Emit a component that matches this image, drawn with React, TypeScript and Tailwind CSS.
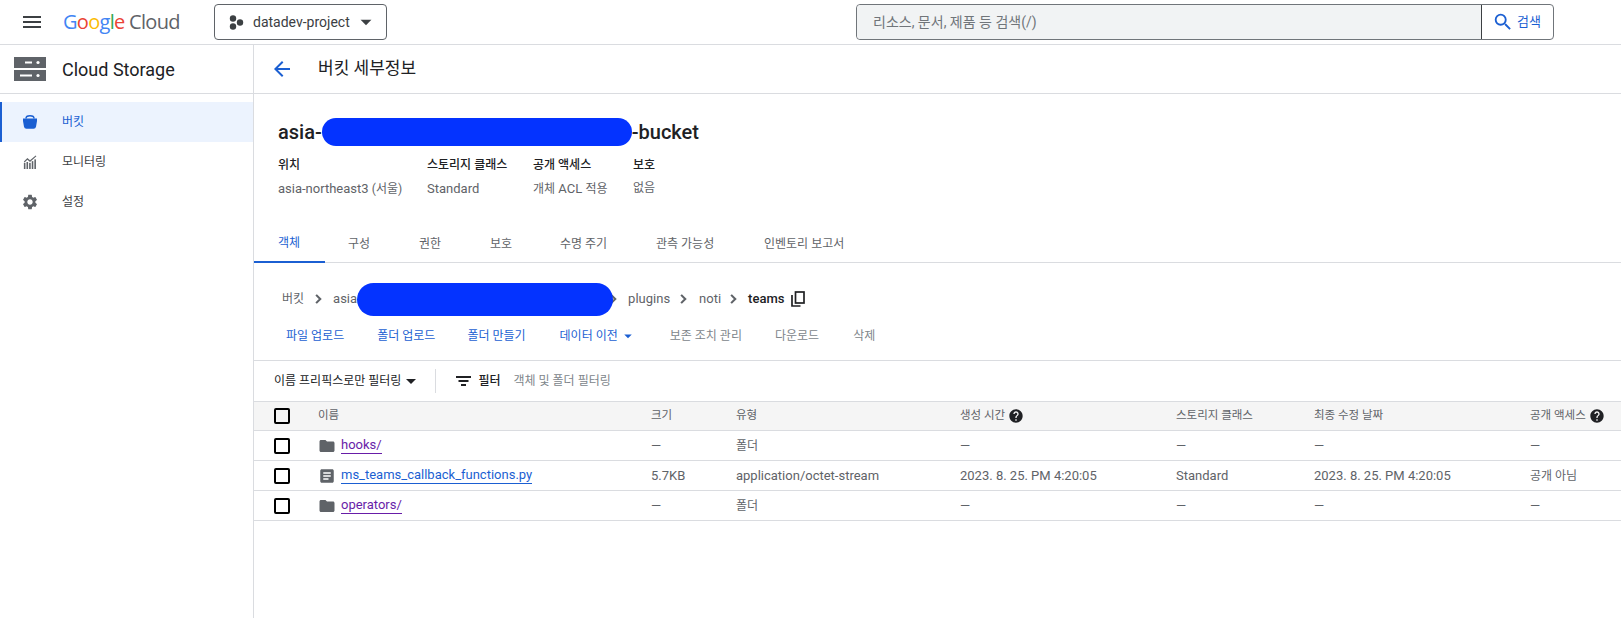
import React from 'react';
import {
  MdArrowBack,
  MdArrowDropDown,
  MdArticle,
  MdFolder,
  MdHelp,
  MdMenu,
  MdSearch,
  MdSettings,
} from 'react-icons/md';

const BucketIcon = () => (
  <svg width="14" height="14" viewBox="0 0 14 14" className="text-[#1b5fd2]">
    <path fill="none" stroke="currentColor" strokeWidth="1.500" d="M3 3.500C3 1.800 4.500 .8 7 .8s4 1 4 2.700" />
    <path fill="currentColor" d="M0 3.500h14v2.500l-1 5.800a2.500 2.500 0 0 1-2.500 2h-7a2.500 2.500 0 0 1-2.500-2L0 6z" />
  </svg>
);

const MonitorIcon = () => (
  <svg width="14" height="14" viewBox="0 0 16 16" fill="#5f6368">
    <rect x="1" y="9" width="1.800" height="7" />
    <rect x="4" y="8" width="1.800" height="8" />
    <rect x="7" y="9" width="1.800" height="7" />
    <rect x="10" y="7" width="1.800" height="9" />
    <rect x="13" y="5" width="1.800" height="11" />
    <path d="M1 7.500 5 3.500l3 2.500L14.500 .5l.8.9L8 8 5 5.500 1.800 8.500z" />
  </svg>
);

const StorageLogo = () => (
  <svg width="32" height="24" viewBox="0 0 32 24">
    <rect x="0" y="0" width="32" height="11" fill="#5f6368" />
    <rect x="0" y="13" width="32" height="11" fill="#5f6368" />
    <rect x="11" y="4.500" width="7" height="2" fill="#fff" />
    <circle cx="24" cy="5.500" r="1.600" fill="#fff" />
    <rect x="6" y="17.500" width="12" height="2" fill="#fff" />
    <circle cx="24" cy="18.500" r="1.600" fill="#fff" />
  </svg>
);

const ProjectDots = () => (
  <svg width="15" height="15" viewBox="0 0 15 15" fill="#3c4043">
    <circle cx="4" cy="3.500" r="3.200" />
    <circle cx="4" cy="11.500" r="3.200" />
    <circle cx="11" cy="7.500" r="3.200" />
  </svg>
);

const CopyIcon = () => (
  <svg width="14" height="16" viewBox="0 0 14 16" fill="none" stroke="#202124" strokeWidth="1.700" className="ml-[7px]">
    <rect x="4.500" y="1" width="8.500" height="11" />
    <path d="M1 4v11h8.500" />
  </svg>
);

const FilterIcon = () => (
  <svg width="15" height="10" viewBox="0 0 15 10" fill="#202124" className="ml-[20px]">
    <rect x="0" y="0" width="15" height="2" />
    <rect x="2.500" y="4" width="10" height="2" />
    <rect x="5" y="8" width="5" height="2" />
  </svg>
);

const Blob = ({ className }: { className: string }) => (
  <span className={`relative z-10 inline-block bg-[#0433ff] ${className}`}></span>
);

const Chev = ({ className }: { className: string }) => (
  <svg width="18" height="18" viewBox="0 0 24 24" fill="none" stroke="#5f6368" strokeWidth="2.800" className={className}>
    <path d="M9.500 6.500 15 12l-5.500 5.500" />
  </svg>
);

const Check = () => <span className="ml-[20px] block w-4 h-4 rounded-[2px] border-2 border-black"></span>;

const Dash = () => <span className="text-[13px]">—</span>;

const COLS = 'grid grid-cols-[64px_333px_85px_224px_216px_138px_216px_1fr] items-center';

const rows = [
  { name: 'hooks/', folder: true, size: '', type: '폴더', created: '', cls: '', modified: '', access: '' },
  {
    name: 'ms_teams_callback_functions.py',
    folder: false,
    size: '5.7KB',
    type: 'application/octet-stream',
    created: '2023. 8. 25. PM 4:20:05',
    cls: 'Standard',
    modified: '2023. 8. 25. PM 4:20:05',
    access: '공개 아님',
  },
  { name: 'operators/', folder: true, size: '', type: '폴더', created: '', cls: '', modified: '', access: '' },
];

export default function App() {
  return (
    <div className="h-[618px] w-full overflow-hidden bg-white text-[13px] text-[#5f6368] font-['Roboto','Noto_Sans_CJK_KR',sans-serif] flex flex-col">
      {/* Top bar */}
      <header className="h-[45px] shrink-0 border-b border-[#dadce0] flex items-center">
        <MdMenu size={24} className="ml-[20px] text-[#3c4043]" />
        <div className="ml-[19px] w-[127px] text-[20px] tracking-[-0.7px] font-['Open_Sans',sans-serif] whitespace-nowrap">
          <span className="text-[#4285f4]">G</span>
          <span className="text-[#ea4335]">o</span>
          <span className="text-[#fbbc04]">o</span>
          <span className="text-[#4285f4]">g</span>
          <span className="text-[#34a853]">l</span>
          <span className="text-[#ea4335]">e</span>
          <span className="text-[#5f6368]"> Cloud</span>
        </div>
        <button className="ml-[24px] h-[36px] w-[173px] border border-[#5f6368] rounded flex items-center pl-[14px] text-[14px] text-[#3c4043]">
          <ProjectDots />
          <span className="ml-[9px]">datadev-project</span>
          <MdArrowDropDown size={26} className="ml-[3px] text-[#3c4043]" />
        </button>
        <div className="ml-[469px] h-[36px] w-[698px] border border-[#70757a] rounded flex items-center">
          <div className="flex-1 h-full bg-[#f1f3f4] rounded-l flex items-center pl-[16px] text-[14px] text-[#70757a] border-r border-[#3c4043]">
            리소스, 문서, 제품 등 검색(/)
          </div>
          <div className="w-[71px] flex items-center pl-[10px] gap-[3px] text-[13px] text-[#1b5fd2]">
            <MdSearch size={22} />
            검색
          </div>
        </div>
      </header>

      <div className="flex-1 flex min-h-0">
        {/* Sidebar */}
        <aside className="w-[254px] shrink-0 border-r border-[#dadce0]">
          <div className="h-[49px] border-b border-[#dadce0] flex items-center pl-[14px] text-[18px] text-[#202124]">
            <StorageLogo />
            <span className="ml-[16px]">Cloud Storage</span>
          </div>
          <nav className="mt-[8px] text-[12px]">
            <div className="h-[40px] flex items-center bg-[#ecf3fe] border-l-2 border-[#1b5fd2] pl-[21px] text-[#1b5fd2]">
              <BucketIcon />
              <span className="ml-[25px]">버킷</span>
            </div>
            <div className="h-[40px] flex items-center pl-[23px] text-[#3c4043]">
              <MonitorIcon />
              <span className="ml-[25px]">모니터링</span>
            </div>
            <div className="h-[40px] flex items-center pl-[21px] text-[#3c4043]">
              <MdSettings size={18} className="text-[#5f6368]" />
              <span className="ml-[23px]">설정</span>
            </div>
          </nav>
        </aside>

        {/* Main */}
        <main className="flex-1 min-w-0">
          <div className="h-[49px] border-b border-[#dadce0] flex items-center pl-[16px] text-[17px] text-[#202124]">
            <MdArrowBack size={24} className="text-[#1b5fd2]" />
            <span className="ml-[24px]">버킷 세부정보</span>
          </div>

          <div className="pt-[22px] pl-[24px]">
            <h1 className="h-[32px] flex items-center text-[20px] font-medium text-[#202124]">
              asia-
              <Blob className="w-[310px] h-[28px] rounded-[14px]" />
              -bucket
            </h1>
            <div className="mt-[8px] grid grid-cols-[149px_106px_100px_80px] text-[12px]">
              <div className="font-medium text-[#202124]">위치</div>
              <div className="font-medium text-[#202124]">스토리지 클래스</div>
              <div className="font-medium text-[#202124]">공개 액세스</div>
              <div className="font-medium text-[#202124]">보호</div>
              <div className="mt-[5px] h-[20px] text-[13px]">asia-northeast3 <span className="text-[12px]">(서울)</span></div>
              <div className="mt-[5px] h-[20px] text-[13px]">Standard</div>
              <div className="mt-[5px] h-[20px] text-[13px]"><span className="text-[12px]">개체</span> ACL <span className="text-[12px]">적용</span></div>
              <div className="mt-[5px] h-[20px]">없음</div>
            </div>
          </div>

          {/* Tabs */}
          <div className="mt-[26px] h-[38px] border-b border-[#dadce0] flex text-[12px]">
            <div className="w-[71px] pl-[24px] flex items-center text-[#1b5fd2] border-b-2 border-[#1b5fd2] -mb-px">객체</div>
            <div className="w-[71px] flex items-center pl-[23px]">구성</div>
            <div className="w-[71px] flex items-center pl-[23px]">권한</div>
            <div className="w-[70px] flex items-center pl-[23px]">보호</div>
            <div className="w-[119px] flex items-center pl-[23px]">수명 주기</div>
            <div className="w-[108px] flex items-center">관측 가능성</div>
            <div className="flex items-center">인벤토리 보고서</div>
          </div>

          {/* Breadcrumb */}
          <div className="mt-[19px] h-[34px] flex items-center pl-[28px] text-[13px] whitespace-nowrap">
            <span className="text-[12px]">버킷</span>
            <Chev className="ml-[5px]" />
            <span className="ml-[6px]">asia</span>
            <Blob className="w-[256px] h-[33px] rounded-[17px]" />
            <Chev className="-ml-[9px]" />
            <span className="ml-[6px]">plugins</span>
            <Chev className="ml-[4px]" />
            <span className="ml-[7px]">noti</span>
            <Chev className="ml-[3px]" />
            <span className="ml-[6px] font-medium text-[#202124]">teams</span>
            <CopyIcon />
          </div>

          {/* Actions */}
          <div className="h-[44px] pb-[4px] flex items-center text-[12px] whitespace-nowrap">
            <span className="ml-[32px] text-[#1b5fd2]">파일 업로드</span>
            <span className="ml-[33px] text-[#1b5fd2]">폴더 업로드</span>
            <span className="ml-[32px] text-[#1b5fd2]">폴더 만들기</span>
            <span className="ml-[34px] text-[#1b5fd2] flex items-center">
              데이터 이전
              <MdArrowDropDown size={18} className="ml-[1px]" />
            </span>
            <span className="ml-[33px] text-[#80868b]">보존 조치 관리</span>
            <span className="ml-[33px] text-[#80868b]">다운로드</span>
            <span className="ml-[34px] text-[#80868b]">삭제</span>
          </div>

          {/* Filter row */}
          <div className="h-[41px] border-t border-[#dadce0] flex items-center pl-[20px] text-[12px] whitespace-nowrap">
            <span className="text-[#202124] flex items-center">
              이름 프리픽스로만 필터링
              <MdArrowDropDown size={24} className="-ml-[2px] text-[#202124]" />
            </span>
            <span className="ml-[12px] h-[24px] border-l border-[#dadce0]"></span>
            <FilterIcon />
            <span className="ml-[7px] font-medium text-[#202124]">필터</span>
            <span className="ml-[13px] text-[#80868b]">객체 및 폴더 필터링</span>
          </div>

          {/* Table */}
          <div className="text-[11.5px]">
            <div className={`${COLS} h-[30px] bg-[#f5f5f5] border-y border-[#dadce0]`}>
              <Check />
              <div>이름</div>
              <div>크기</div>
              <div>유형</div>
              <div className="flex items-center gap-[3px]">생성 시간 <MdHelp size={16} className="text-[#202124]" /></div>
              <div>스토리지 클래스</div>
              <div>최종 수정 날짜</div>
              <div className="flex items-center gap-[3px]">공개 액세스 <MdHelp size={16} className="text-[#202124]" /></div>
            </div>
            {rows.map((r) => (
              <div key={r.name} className={`${COLS} h-[30px] border-b border-[#dadce0] text-[13px]`}>
                <Check />
                <div className="flex items-center gap-[5px]">
                  {r.folder ? <MdFolder size={18} /> : <MdArticle size={18} />}
                  <span className={`leading-[16px] border-b ${r.folder ? 'text-[#681da8] border-[#681da8]' : 'text-[#1b5fd2] border-[#1b5fd2]'}`}>
                    {r.name}
                  </span>
                </div>
                <div>{r.size || <Dash />}</div>
                <div className={r.folder ? 'text-[12px]' : ''}>{r.type}</div>
                <div>{r.created || <Dash />}</div>
                <div>{r.cls || <Dash />}</div>
                <div>{r.modified || <Dash />}</div>
                <div className="text-[12px]">{r.access || <Dash />}</div>
              </div>
            ))}
          </div>
        </main>
      </div>
    </div>
  );
}
